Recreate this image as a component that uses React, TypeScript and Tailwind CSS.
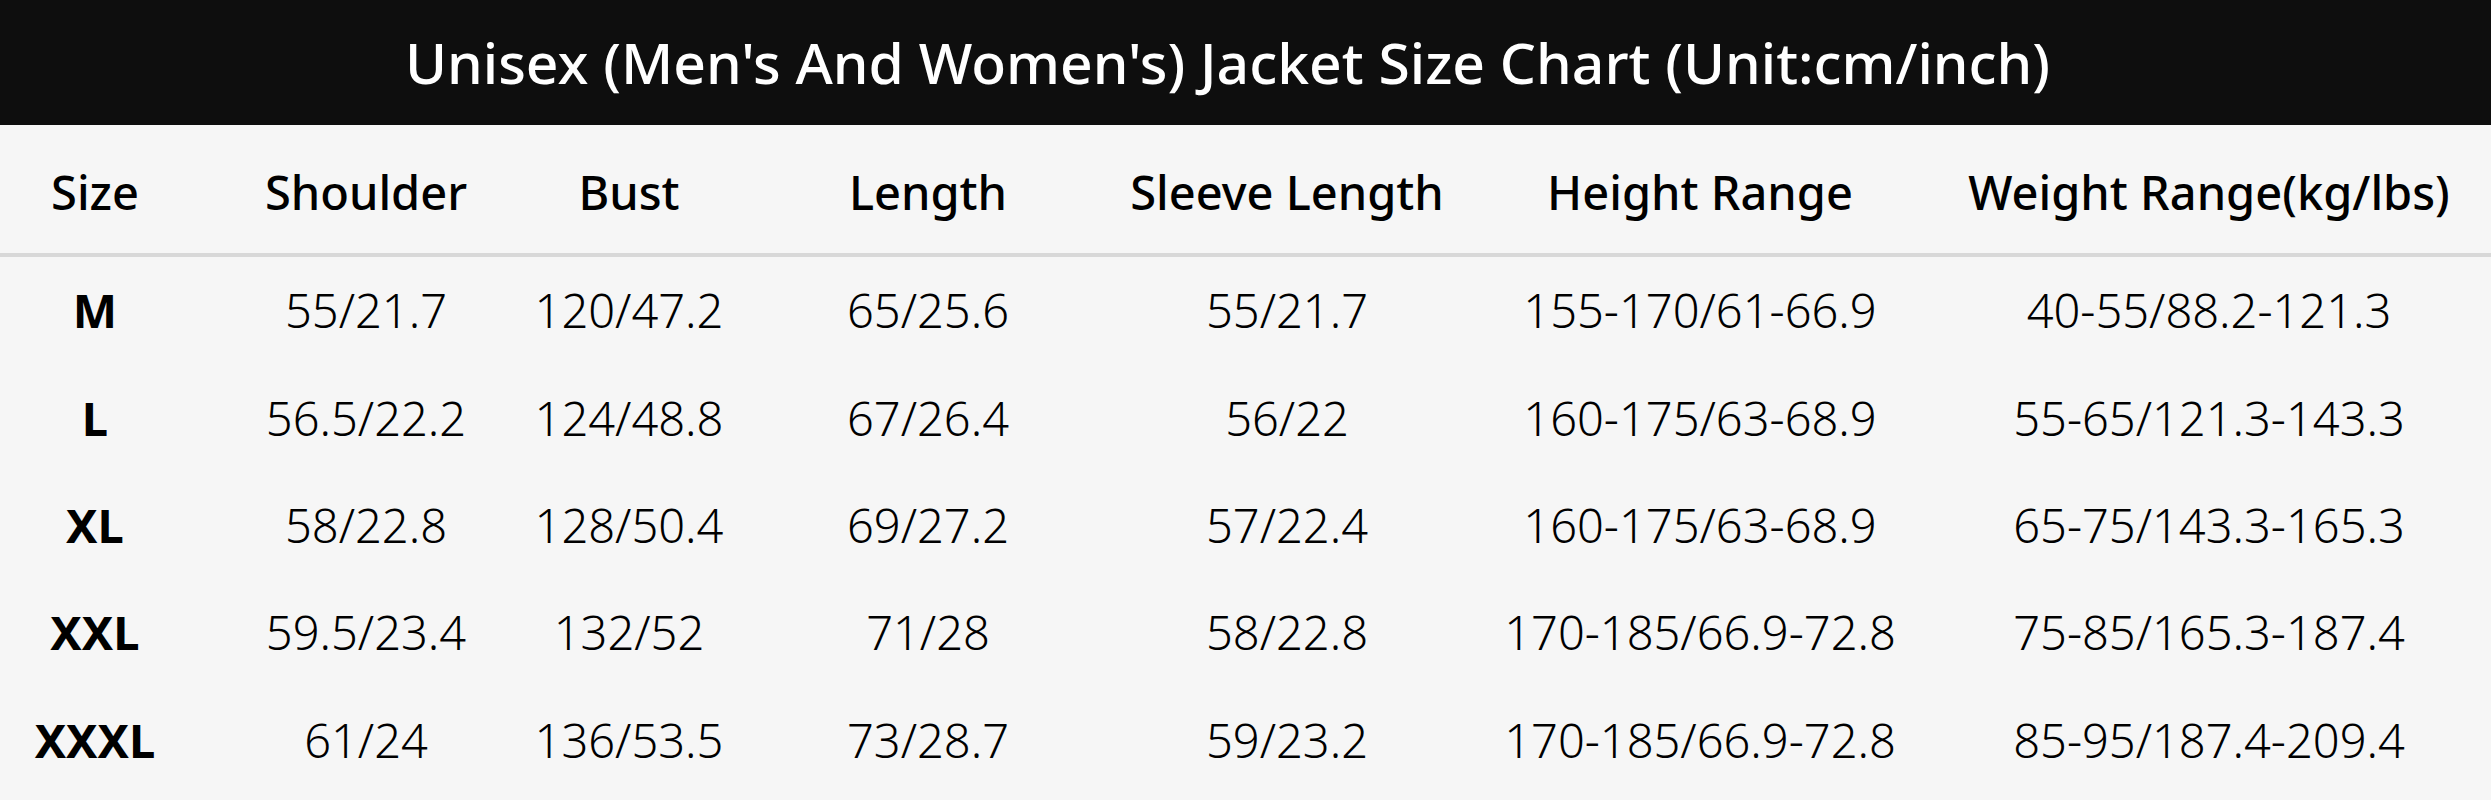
const columns = [
  { label: "Size", width: "w-[190px]" },
  { label: "Shoulder", width: "w-[352px]" },
  { label: "Bust", width: "w-[174px]" },
  { label: "Length", width: "w-[424px]" },
  { label: "Sleeve Length", width: "w-[294px]" },
  { label: "Height Range", width: "w-[532px]" },
  { label: "Weight Range(kg/lbs)", width: "w-[486px]" },
];

const rows = [
  ["M", "55/21.7", "120/47.2", "65/25.6", "55/21.7", "155-170/61-66.9", "40-55/88.2-121.3"],
  ["L", "56.5/22.2", "124/48.8", "67/26.4", "56/22", "160-175/63-68.9", "55-65/121.3-143.3"],
  ["XL", "58/22.8", "128/50.4", "69/27.2", "57/22.4", "160-175/63-68.9", "65-75/143.3-165.3"],
  ["XXL", "59.5/23.4", "132/52", "71/28", "58/22.8", "170-185/66.9-72.8", "75-85/165.3-187.4"],
  ["XXXL", "61/24", "136/53.5", "73/28.7", "59/23.2", "170-185/66.9-72.8", "85-95/187.4-209.4"],
];

export default function App() {
  return (
    <div className="flex h-[800px] w-[2491px] flex-col overflow-hidden bg-[#f6f6f6] font-['Noto_Sans','Noto_Sans_CJK_SC',sans-serif]">
      {/* Title bar */}
      <div className="flex h-[125px] shrink-0 items-center justify-center bg-[#0e0e0e] pr-[36px]">
        <h1 className="whitespace-nowrap text-[57px] leading-none font-medium text-white">
          Unisex (Men's And Women's) Jacket Size Chart (Unit:cm/inch)
        </h1>
      </div>

      {/* Column headings */}
      <div className="flex h-[128px] shrink-0 items-center pt-[6px]">
        {columns.map((c) => (
          <div key={c.label} className={`flex ${c.width} shrink-0 justify-center`}>
            <span className="shrink-0 whitespace-nowrap text-[47px] leading-none font-medium text-black">
              {c.label}
            </span>
          </div>
        ))}
      </div>
      <div className="h-[4px] shrink-0 bg-[#d8d8d8]" />

      {/* Size rows */}
      <div className="flex flex-1 flex-col pb-[6px]">
        {rows.map((r) => (
          <div key={r[0]} className="flex flex-1 items-center">
            {r.map((cell, i) => (
              <div key={i} className={`flex ${columns[i].width} shrink-0 justify-center`}>
                <span
                  className={`shrink-0 whitespace-nowrap text-[47px] leading-none text-black ${
                    i === 0 ? "font-bold" : "font-light"
                  }`}
                >
                  {cell}
                </span>
              </div>
            ))}
          </div>
        ))}
      </div>
    </div>
  );
}
